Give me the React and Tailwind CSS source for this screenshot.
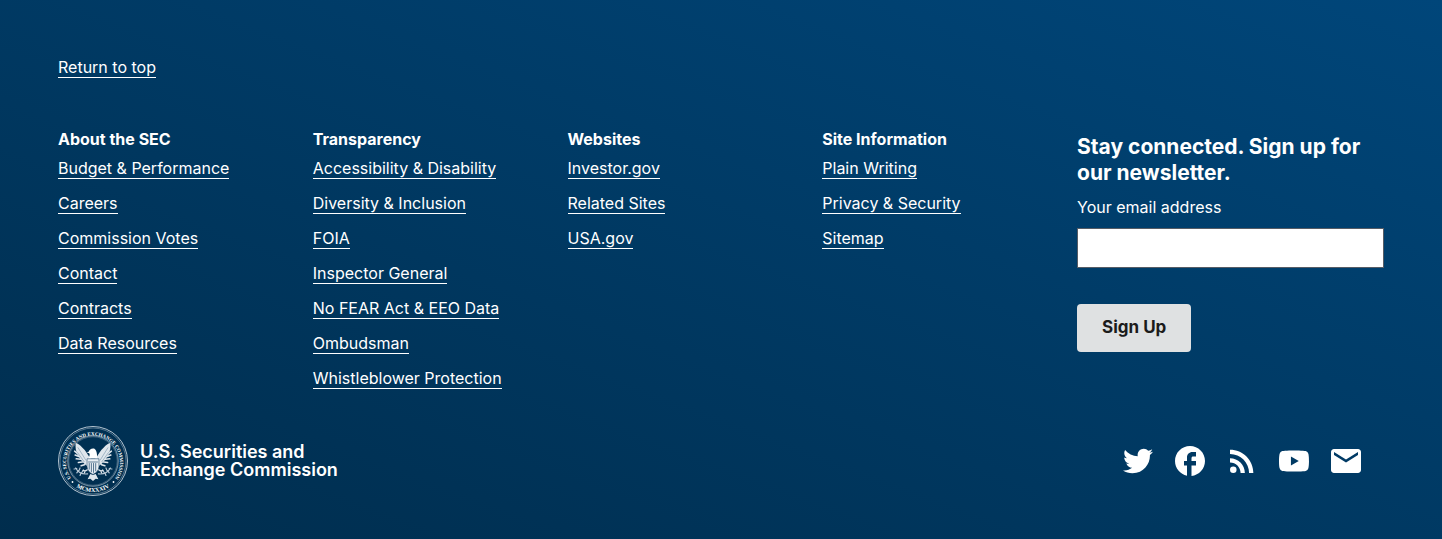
import { MdFacebook, MdRssFeed, MdMail } from "react-icons/md";
import { FaTwitter } from "react-icons/fa";
import { SiYoutube } from "react-icons/si";

const columns = [
  {
    title: "About the SEC",
    links: ["Budget & Performance", "Careers", "Commission Votes", "Contact", "Contracts", "Data Resources"],
  },
  {
    title: "Transparency",
    links: [
      "Accessibility & Disability",
      "Diversity & Inclusion",
      "FOIA",
      "Inspector General",
      "No FEAR Act & EEO Data",
      "Ombudsman",
      "Whistleblower Protection",
    ],
  },
  { title: "Websites", links: ["Investor.gov", "Related Sites", "USA.gov"] },
  { title: "Site Information", links: ["Plain Writing", "Privacy & Security", "Sitemap"] },
];

const social = [
  { label: "Twitter", Icon: FaTwitter, size: 30 },
  { label: "Facebook", Icon: MdFacebook, size: 36 },
  { label: "RSS", Icon: MdRssFeed, size: 36 },
  { label: "YouTube", Icon: SiYoutube, size: 30 },
  { label: "Email", Icon: MdMail, size: 36 },
];

function FooterLink({ children }) {
  return (
    <a href="#" className="inline-block border-b border-white leading-[19px]">
      {children}
    </a>
  );
}

function Wing() {
  return (
    <g>
      <path d="M67 66 C60 58 57 50 50 44 C46 40 42 37 38 36 C37 44 38 51 42 58 C46 66 52 74 61 80 Z" fill="#dfe6ec" />
      <path d="M42 56 L36 51 M44 61 L37 58 M47 66 L39 65 M50 71 L43 72 M54 76 L48 78" stroke="#dfe6ec" strokeWidth="3" strokeLinecap="round" />
      <path d="M42 44 L57 68 M41 53 L54 71" stroke="#4d7290" strokeWidth="0.8" fill="none" />
      <path d="M60 93 C50 94 42 90 38 82 M43 87 L40 91 M48 91 L46 96 M40 83 L35 84 M44 87 L46 82 M49 91 L52 86" stroke="#b9c9d6" strokeWidth="2.2" fill="none" strokeLinecap="round" />
      <path d="M62 84 L55 88 L51 86 M55 88 L54 92" stroke="#dfe6ec" strokeWidth="2.4" fill="none" />
    </g>
  );
}

function Seal() {
  return (
    <svg viewBox="0 0 140 140" className="size-[70px] shrink-0" role="img" aria-label="SEC seal">
      <defs>
        <path id="ring-top" d="M 27.4 105.8 A 53.8 53.8 0 1 1 112.6 105.8" />
        <path id="ring-bottom" d="M 22 109 A 61.5 61.5 0 0 0 118 109" />
      </defs>
      <g fill="none" stroke="#c8d5df">
        <circle cx="70" cy="70" r="69" strokeWidth="1.8" />
        <circle cx="70" cy="70" r="66" strokeWidth="0.8" />
        <circle cx="70" cy="70" r="50.5" strokeWidth="1.2" />
        <circle cx="70" cy="70" r="48.5" strokeWidth="0.6" />
      </g>
      <g fill="#ffffff" className="font-['Liberation_Serif',serif] font-bold">
        <text fontSize="10">
          <textPath href="#ring-top" startOffset="50%" textAnchor="middle">
            U.S. SECURITIES AND EXCHANGE COMMISSION
          </textPath>
        </text>
        <text fontSize="12">
          <textPath href="#ring-bottom" startOffset="50%" textAnchor="middle">
            MCMXXXIV
          </textPath>
        </text>
        <circle cx="29" cy="112" r="1.8" />
        <circle cx="111" cy="112" r="1.8" />
      </g>
      <g transform="translate(70 72) scale(1.08) translate(-70 -71)">
        <Wing />
        <g transform="translate(140 0) scale(-1 1)">
          <Wing />
        </g>
        <path d="M72 46 C67 45 63 48 62 52 L58 53 L63 55 C65 57 63 61 62 65 L78 65 C77 60 79 51 72 46 Z" fill="#fff" />
        <path d="M59 65 H81 V79 C81 87 75 92 70 94 C65 92 59 87 59 79 Z" fill="#e8eef3" stroke="#123b60" />
        <path d="M63 73 V85 M67 73 V90 M71 73 V91 M75 73 V88" stroke="#315878" strokeWidth="1.5" />
        <path d="M61 71 H79" stroke="#315878" strokeWidth="1.4" />
        <path d="M65 93 L60 103 L65 102 L70 106 L75 102 L80 103 L75 93 L70 95 Z" fill="#dfe6ec" />
      </g>
    </svg>
  );
}

export default function App() {
  return (
    <footer className="bg-linear-to-tr from-[#002d4d] to-[#00467a] px-[58px] pt-[58px] pb-[43px] font-[Inter,sans-serif] text-base text-white">
      <div className="flex">
        <FooterLink>Return to top</FooterLink>
      </div>

      <div className="mt-[52px] grid grid-cols-[repeat(4,minmax(0,83fr))_minmax(0,100fr)]">
        {columns.map(({ title, links }) => (
          <nav key={title} aria-label={title}>
            <h2 className="font-bold leading-[19px]">{title}</h2>
            <ul className="mt-[10px] flex flex-col gap-[15px]">
              {links.map((link) => (
                <li key={link} className="flex">
                  <FooterLink>{link}</FooterLink>
                </li>
              ))}
            </ul>
          </nav>
        ))}

        <form className="pt-1" onSubmit={(e) => e.preventDefault()}>
          <h2 className="text-[21px] font-bold leading-[26px]">Stay connected. Sign up for our newsletter.</h2>
          <label htmlFor="email" className="mt-3 block leading-[19px]">
            Your email address
          </label>
          <input
            id="email"
            type="email"
            className="mt-[11px] block h-10 w-full border border-[#565c65] bg-white px-2 text-[#1b1b1b]"
          />
          <button type="submit" className="mt-9 h-12 rounded bg-[#dfe1e2] px-[25px] text-[17px] font-bold text-[#1b1b1b]">
            Sign Up
          </button>
        </form>
      </div>

      <div className="mt-[37px] flex items-center justify-between">
        <a href="#" className="flex items-center gap-3">
          <Seal />
          <span className="text-lg font-semibold leading-[18px]">
            U.S. Securities and
            <br />
            Exchange Commission
          </span>
        </a>
        <div className="flex gap-4 pr-5">
          {social.map(({ label, Icon, size }) => (
            <a key={label} href="#" aria-label={label} className="flex size-9 items-center justify-center">
              <Icon size={size} />
            </a>
          ))}
        </div>
      </div>
    </footer>
  );
}
